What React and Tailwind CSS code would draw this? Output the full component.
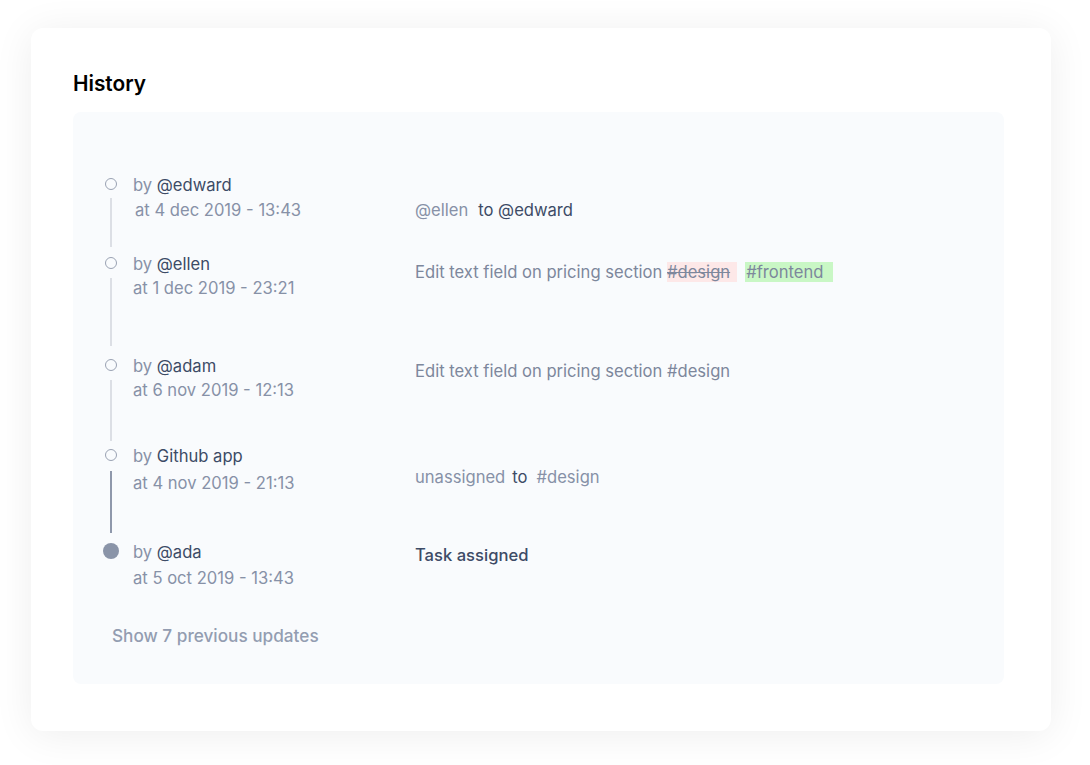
import React from "react";

const rows = [
  {
    by: "@edward",
    date: "at 4 dec 2019 - 13:43",
    height: "h-[79px]",
    dateClass: "ml-[2px] mt-[1px]",
    lineClass: "mt-[8px] mb-[5px]",
    rightClass: "mt-[25px]",
    right: (
      <>
        <span className="text-[#8791a7]">@ellen</span>
        <span className="ml-[10px] text-[#3d4b66]">to @edward</span>
      </>
    ),
  },
  {
    by: "@ellen",
    date: "at 1 dec 2019 - 23:21",
    height: "h-[102px]",
    lineClass: "mt-[9px] mb-[8px]",
    rightClass: "mt-[8px]",
    right: (
      <>
        <span className="text-[#7d879c]">Edit text field on pricing section </span>
        <span className="bg-[#fde8e8] pr-[7px] text-[#7d879c] line-through">#design</span>
        <span className="ml-[8px] bg-[#c9f7c5] pl-[1px] pr-[10px] text-[#7d879c]">#frontend</span>
      </>
    ),
  },
  {
    by: "@adam",
    date: "at 6 nov 2019 - 12:13",
    height: "h-[90px]",
    lineClass: "mt-[9px] mb-[3px]",
    rightClass: "mt-[5px]",
    right: <span className="text-[#7d879c]">Edit text field on pricing section #design</span>,
  },
  {
    by: "Github app",
    date: "at 4 nov 2019 - 21:13",
    height: "h-[96px]",
    dateClass: "mt-[3px]",
    lineClass: "mt-[10px] mb-[7px]",
    lineColor: "bg-[#8f98ab]",
    rightClass: "mt-[21px]",
    right: (
      <>
        <span className="text-[#8791a7]">unassigned</span>
        <span className="ml-[7px] text-[#3d4b66]">to</span>
        <span className="ml-[9px] text-[#8791a7]">#design</span>
      </>
    ),
  },
  {
    by: "@ada",
    date: "at 5 oct 2019 - 13:43",
    height: "h-[50px]",
    dateClass: "mt-[2px]",
    filled: true,
    rightClass: "mt-[3px]",
    right: <span className="font-medium text-[#3d4b66]">Task assigned</span>,
  },
];

function Row({ row }) {
  return (
    <div className={`flex ${row.height}`}>
      <div className="flex w-[12px] flex-col items-center">
        {row.filled ? (
          <div className="mt-[3px] h-[16px] w-[16px] shrink-0 rounded-full bg-[#8a94a8]" />
        ) : (
          <div className="mt-[5px] h-[12px] w-[12px] shrink-0 rounded-full border-[1.5px] border-[#9aa2b3]" />
        )}
        {!row.filled && (
          <div className={`w-[2px] flex-1 ${row.lineColor || "bg-[#dcdfe5]"} ${row.lineClass}`} />
        )}
      </div>
      <div className="ml-[16px] w-[282px]">
        <div className="leading-[24px] text-[#8791a7]">
          by <span className="text-[#3d4b66]">{row.by}</span>
        </div>
        <div className={`leading-[24px] text-[#8791a7] ${row.dateClass || ""}`}>{row.date}</div>
      </div>
      <div className={`leading-[24px] ${row.rightClass}`}>
        <span className="inline-block leading-[19px]">{row.right}</span>
      </div>
    </div>
  );
}

export default function App() {
  return (
    <div className="min-h-screen bg-white pt-[28px] pl-[31px] font-['Inter',sans-serif] text-[16.6px]">
      <div className="w-[1020px] h-[703px] rounded-[12px] bg-white pt-[42px] pl-[42px] pr-[47px] shadow-[0_4px_40px_rgba(0,0,0,0.07)]">
        <h2 className="text-[20.8px] font-semibold leading-[28px] text-black">History</h2>
        <div className="mt-[14px] h-[572px] rounded-[8px] bg-[#f9fbfd] pt-[61px] pl-[32px]">
          {rows.map((row, i) => (
            <Row key={i} row={row} />
          ))}
          <div className="mt-[34px] ml-[7px] text-[17.2px] font-medium leading-[24px] text-[#939db1]">
            Show 7 previous updates
          </div>
        </div>
      </div>
    </div>
  );
}
